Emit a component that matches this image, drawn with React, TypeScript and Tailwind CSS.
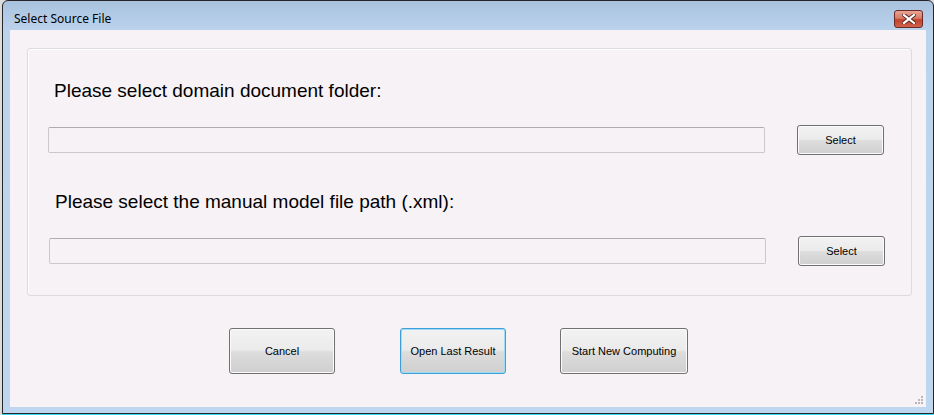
import React from 'react';

const Btn: React.FC<{ label: string; className?: string; focused?: boolean }> = ({ label, className = '', focused }) => (
  <div
    className={`flex items-center justify-center rounded-[3px] border text-[11px] text-black ${
      focused ? 'border-[#3c9fd8] shadow-[inset_0_0_0_1px_#9fdcf7]' : 'border-[#707070] shadow-[inset_0_0_0_1px_#fbfbfb]'
    } bg-[linear-gradient(to_bottom,#f2f2f2_0%,#ebebeb_48%,#dddddd_52%,#cfcfcf_100%)] ${className}`}
    style={{ fontFamily: '"Liberation Sans", Arial, sans-serif' }}
  >
    {label}
  </div>
);

const TextBox: React.FC = () => (
  <div className="h-[26px] w-[717px] rounded-[2px] border border-[#c9c9c9] border-t-[#adadad] bg-[#f6f2f6]" />
);

export default function App() {
  return (
    <div className="w-[934px] h-[415px] bg-[#dcdcdc] pl-[2px] overflow-hidden">
      <div className="w-[932px] h-[414px] rounded-t-[6px] border border-[#262626] bg-[linear-gradient(to_bottom,#a8c2df,#bcd3ee_30px,#bfd6f0)] flex flex-col">
        {/* title bar */}
        <div className="h-[29px] flex items-center justify-between pl-[11px] pr-[10px]">
          <span className="text-[12px] text-black pt-[6px]" style={{ fontFamily: '"Noto Sans", "Open Sans", sans-serif' }}>
            Select Source File
          </span>
          <div className="w-[29px] h-[18px] mt-[6px] rounded-[3px] border border-[#6b2a25] bg-[linear-gradient(to_bottom,#e8a493,#d77a66_45%,#c2422d_55%,#d0624a)] flex items-center justify-center">
            <svg width="14" height="10" viewBox="0 0 14 10">
              <path d="M2 1 L12 9 M12 1 L2 9" stroke="#5a2a24" strokeWidth="4" strokeLinecap="square" />
              <path d="M2 1 L12 9 M12 1 L2 9" stroke="#ffffff" strokeWidth="2.2" strokeLinecap="square" />
            </svg>
          </div>
        </div>

        {/* client */}
        <div className="relative mx-[7px] h-[377px] bg-[#f6f2f6]" style={{ fontFamily: '"Liberation Sans", Arial, sans-serif' }}>
          <div className="ml-[17px] mt-[18px] w-[885px] h-[248px] rounded-[3px] border border-[#dcdcdc] shadow-[inset_1px_1px_0_#ffffff]">
            <div className="pl-[26px] pt-[31px] text-[19px] leading-[22px] text-black">Please select domain document folder:</div>
            <div className="flex items-center mt-[23px] pl-[20px] h-[30px]">
              <TextBox />
              <Btn label="Select" className="ml-[32px] w-[87px] h-[30px]" />
            </div>
            <div className="pl-[27px] pt-[36px] text-[19px] leading-[22px] text-black">Please select the manual model file path (.xml):</div>
            <div className="flex items-center mt-[23px] pl-[21px] h-[30px]">
              <TextBox />
              <Btn label="Select" className="ml-[32px] w-[87px] h-[30px]" />
            </div>
          </div>

          <div className="flex mt-[32px] pl-[219px]">
            <Btn label="Cancel" className="w-[106px] h-[46px]" />
            <Btn label="Open Last Result" focused className="ml-[65px] w-[106px] h-[46px]" />
            <Btn label="Start New Computing" className="ml-[54px] w-[128px] h-[46px]" />
          </div>

          {/* size grip */}
          <svg className="absolute right-[3px] bottom-[3px]" width="8" height="8" viewBox="0 0 8 8">
            <rect x="6" y="0" width="2" height="2" fill="#b8b8b8" />
            <rect x="3" y="3" width="2" height="2" fill="#b8b8b8" />
            <rect x="6" y="3" width="2" height="2" fill="#b8b8b8" />
            <rect x="0" y="6" width="2" height="2" fill="#b8b8b8" />
            <rect x="3" y="6" width="2" height="2" fill="#b8b8b8" />
            <rect x="6" y="6" width="2" height="2" fill="#b8b8b8" />
          </svg>
        </div>
      </div>
      <div className="h-[1px] w-[932px] bg-[#3ad7ef]" />
    </div>
  );
}
